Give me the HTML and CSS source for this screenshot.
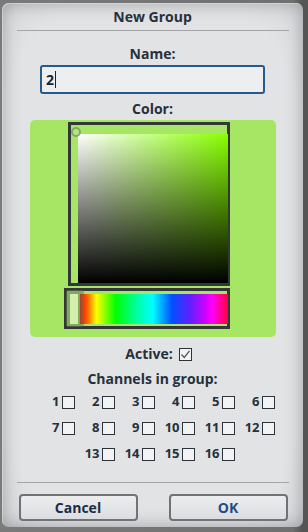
FILE: index.html
```html
<!DOCTYPE html>
<html>
<head>
<meta charset="utf-8">
<link rel="stylesheet" href="styles.css">
</head>
<body>
<div class="dialog">
  <div class="title">New Group</div>
  <div class="rule"></div>
  <div class="label name-label">Name:</div>
  <div class="input"><span class="val">2</span><span class="caret"></span></div>
  <div class="label color-label">Color:</div>
  <div class="picker">
    <div class="sv-box">
      <div class="sv"></div>
      <div class="sv-marker"></div>
    </div>
    <div class="hue-box">
      <div class="hue"></div>
      <div class="hue-handle"><div class="hue-handle-inner"></div></div>
    </div>
  </div>
  <div class="active-row">
    <span class="label">Active:</span>
    <span class="cb checked"><svg width="11" height="11" viewBox="0 0 11 11"><path d="M1.5 5.5 L4.3 8.5 L9.5 1.8" fill="none" stroke="#555" stroke-width="1.3"/></svg></span>
  </div>
  <div class="label channels-label">Channels in group:</div>
  <div class="channels">
    <div class="ch"><span>1</span><span class="cb"></span></div>
    <div class="ch"><span>2</span><span class="cb"></span></div>
    <div class="ch"><span>3</span><span class="cb"></span></div>
    <div class="ch"><span>4</span><span class="cb"></span></div>
    <div class="ch"><span>5</span><span class="cb"></span></div>
    <div class="ch"><span>6</span><span class="cb"></span></div>
    <div class="ch"><span>7</span><span class="cb"></span></div>
    <div class="ch"><span>8</span><span class="cb"></span></div>
    <div class="ch"><span>9</span><span class="cb"></span></div>
    <div class="ch"><span>10</span><span class="cb"></span></div>
    <div class="ch"><span>11</span><span class="cb"></span></div>
    <div class="ch"><span>12</span><span class="cb"></span></div>
    <div class="ch"><span>13</span><span class="cb"></span></div>
    <div class="ch"><span>14</span><span class="cb"></span></div>
    <div class="ch"><span>15</span><span class="cb"></span></div>
    <div class="ch"><span>16</span><span class="cb"></span></div>
  </div>
  <div class="spacer"></div>
  <div class="rule bottom-rule"></div>
  <div class="buttons">
    <div class="btn cancel">Cancel</div>
    <div class="btn ok">OK</div>
  </div>
</div>
</body>
</html>
```

FILE: styles.css
```css
html, body {
  margin: 0;
  padding: 0;
}
body {
  width: 308px;
  height: 532px;
  background: linear-gradient(to right, #7a7a7a, #707070 95%, #555 98%);
  overflow: hidden;
  font-family: "Open Sans", "DejaVu Sans", sans-serif;
  color: #222a35;
}
.dialog {
  box-sizing: border-box;
  margin: 3px 5px 0 2px;
  width: 301px;
  height: 524px;
  border-radius: 7px;
  background: radial-gradient(ellipse 75% 70% at 50% 50%, #e2e3e5 80%, #d6d7da 100%);
  box-shadow: inset 0 0 18px rgba(60, 62, 66, 0.42), inset 1px 1px 0 rgba(255,255,255,0.8);
  display: flex;
  flex-direction: column;
  align-items: center;
}
.title {
  font-weight: 700;
  font-size: 14px;
  line-height: 20px;
  margin-top: 4px;
  color: #26303c;
}
.rule {
  width: 272px;
  height: 1px;
  background: #a3a5a8;
  margin-top: 3px;
}
.label {
  font-weight: 700;
  font-size: 14px;
  line-height: 20px;
  color: #26303c;
}
.name-label {
  margin-top: 13px;
}
.input {
  box-sizing: border-box;
  width: 225px;
  height: 29px;
  margin-top: 1px;
  border: 2px solid #245a8c;
  border-radius: 3px;
  background: #eceef0;
  display: flex;
  align-items: center;
  padding-left: 4px;
  font-weight: 700;
  font-size: 14px;
  color: #1c2430;
}
.caret {
  width: 1px;
  height: 17px;
  background: #222;
  margin-left: 1px;
}
.color-label {
  margin-top: 5px;
}
.picker {
  box-sizing: border-box;
  width: 246px;
  height: 217px;
  margin-top: 1px;
  border-radius: 5px;
  background: #a7e664;
  display: flex;
  flex-direction: column;
  align-items: flex-start;
  padding: 2px 0 0 34px;
}
.sv-box {
  position: relative;
  box-sizing: border-box;
  width: 162px;
  height: 164px;
  margin-left: 4px;
  border: 3px solid #33373a;
  padding: 9px 0 0 7px;
}
.sv {
  width: 150px;
  height: 149px;
  background:
    linear-gradient(to top, #000, rgba(0,0,0,0)),
    linear-gradient(to right, #fff, rgba(255,255,255,0)),
    #88ff00;
}
.sv-marker {
  position: absolute;
  left: 0px;
  top: 2px;
  width: 6px;
  height: 6px;
  border: 2px solid rgba(110, 140, 90, 0.7);
  border-radius: 50%;
  background: rgba(200, 230, 170, 0.4);
}
.hue-box {
  position: relative;
  box-sizing: border-box;
  width: 166px;
  height: 41px;
  margin-top: 2px;
  border: 3px solid #33373a;
  padding: 3px 0 0 13px;
}
.hue {
  width: 148px;
  height: 30px;
  background: linear-gradient(to right,
    #ff0000 0%, #ff7a00 6%, #ffff00 11%, #00ff00 24%, #00ffa0 38%, #00ffff 49%,
    #0050ff 62%, #6020ff 74%, #d000ff 85%, #ff00ff 89%, #ff0040 100%);
}
.hue-handle {
  position: absolute;
  left: -1px;
  top: -1px;
  width: 18px;
  height: 37px;
  border-radius: 3px;
  background: rgba(100, 120, 80, 0.55);
}
.hue-handle-inner {
  position: absolute;
  left: 4px;
  top: 4px;
  width: 8px;
  height: 30px;
  background: #d4eeae;
}
.active-row {
  display: flex;
  align-items: center;
  gap: 6px;
  margin-top: 7px;
  margin-left: 12px;
}
.cb {
  box-sizing: border-box;
  display: inline-flex;
  align-items: center;
  justify-content: center;
  width: 13px;
  height: 13px;
  border: 1px solid #2e3136;
  background: #f2f3f4;
}
.channels-label {
  margin-top: 5px;
}
.channels {
  display: flex;
  flex-wrap: wrap;
  justify-content: center;
  width: 240px;
  margin-top: 7px;
  margin-left: 4px;
  row-gap: 13px;
}
.ch {
  width: 40px;
  height: 13px;
  display: flex;
  justify-content: flex-end;
  align-items: center;
  gap: 2px;
  font-weight: 700;
  font-size: 13px;
  line-height: 13px;
  color: #26303c;
}
.ch span:first-child {
  margin-top: -3px;
}
.spacer {
  flex: 1;
}
.bottom-rule {
  margin-bottom: 11px;
}
.buttons {
  width: 269px;
  display: flex;
  justify-content: space-between;
  margin-bottom: 6px;
  margin-left: 1px;
}
.btn {
  box-sizing: border-box;
  width: 119px;
  height: 27px;
  border: 2px solid #6f7377;
  border-radius: 4px;
  background: linear-gradient(to bottom, #ecedef, #dcdde0);
  display: flex;
  align-items: center;
  justify-content: center;
  font-weight: 700;
  font-size: 14px;
}
.cancel { color: #1c2c48; }
.ok { color: #1d4d85; }
```
